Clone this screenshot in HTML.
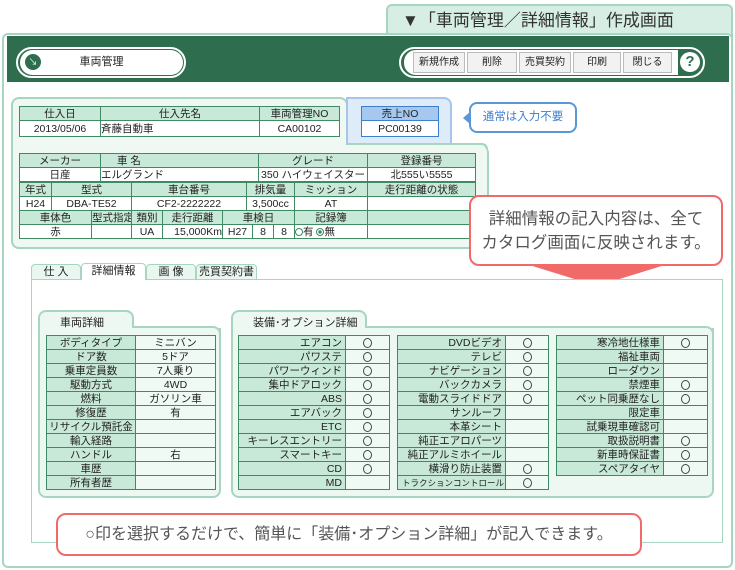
<!DOCTYPE html>
<html><head><meta charset="utf-8"><style>
*{box-sizing:border-box;margin:0;padding:0}
body{width:735px;height:570px;background:#fff;font-family:"Liberation Sans","Noto Sans CJK JP",sans-serif;position:relative;overflow:hidden;color:#222}
.a{position:absolute}
table{border-collapse:collapse;table-layout:fixed;position:absolute;font-size:10.5px}
td{border:1px solid #3d8a63;height:14px;line-height:12px;text-align:center;white-space:nowrap;overflow:hidden;padding:0}
td.h{background:#c8e8d8}
td.v{background:#fff}
.eq td{background:#f0faf5}
.eq td.h{background:#c8e8d8;text-align:right;padding-right:3px}
.c{display:inline-block;width:9px;height:10px;border:1px solid #444;border-radius:50%;vertical-align:middle}
.btn{position:absolute;top:52px;height:21px;background:#f2f2f2;border:1px solid #bbb;font-size:10px;line-height:19px;text-align:center}
.rc{position:absolute;background:#fff;border:2px solid #f06a6a;border-radius:10px;color:#555;text-align:center}
</style></head><body>
<div class="a" style="left:386px;top:4px;width:347px;height:34px;background:#d6eee3;border:2px solid #a6d6c0;border-radius:6px 6px 0 0;font-size:17px;line-height:30px;padding-left:14px;color:#333">▼「車両管理／詳細情報」作成画面</div>
<div class="a" style="left:2px;top:33px;width:731px;height:535px;border:2px solid #a6d6c0;border-radius:6px;background:#fff"></div>
<div class="a" style="left:7px;top:36px;width:722px;height:46px;background:#2e6e4f"></div>
<div class="a" style="left:16px;top:47px;width:170px;height:31px;border:2px solid #fff;border-radius:16px;background:#2e6e4f"></div>
<div class="a" style="left:20px;top:50px;width:163px;height:25px;background:#fff;border-radius:13px;font-size:11px;line-height:25px;text-align:center">車両管理</div>
<div class="a" style="left:25px;top:54px;width:16px;height:16px;border-radius:50%;background:#2e6e4f;color:#fff;font-size:9px;line-height:16px;text-align:center">↘</div>
<div class="a" style="left:399px;top:47px;width:306px;height:31px;border:2px solid #fff;border-radius:16px"></div>
<div class="a" style="left:404px;top:50px;width:274px;height:25px;background:#fff;border-radius:12px 0 0 12px"></div>
<div class="btn" style="left:413px;width:52px">新規作成</div>
<div class="btn" style="left:467px;width:50px">削除</div>
<div class="btn" style="left:519px;width:52px">売買契約</div>
<div class="btn" style="left:573px;width:48px">印刷</div>
<div class="btn" style="left:623px;width:49px">閉じる</div>
<div class="a" style="left:680px;top:52px;width:20px;height:20px;border-radius:50%;background:#fff;color:#2e6e4f;font-weight:bold;font-size:15px;line-height:20px;text-align:center">?</div>

<div class="a" style="left:11px;top:97px;width:337px;height:152px;background:#f0f8f4;border:2px solid #a6d6c0;border-radius:8px"></div>
<div class="a" style="left:346px;top:97px;width:106px;height:52px;background:#deebf8;border:2px solid #a8c4e6;border-radius:0 8px 0 0"></div>
<div class="a" style="left:11px;top:145px;width:478px;height:104px;background:#f0f8f4;border:2px solid #a6d6c0;border-top:none;border-radius:0 8px 8px 8px"></div>
<div class="a" style="left:348px;top:143px;width:140px;height:6px;border-top:2px solid #a6d6c0;border-right:2px solid #a6d6c0;border-radius:0 8px 0 0;background:transparent"></div>
<div class="a" style="left:13px;top:140px;width:333px;height:20px;background:#f0f8f4"></div>

<table style="left:19px;top:106px;width:320px">
<col style="width:81px"><col style="width:159px"><col style="width:80px">
<tr><td class="h">仕入日</td><td class="h">仕入先名</td><td class="h">車両管理NO</td></tr>
<tr><td class="v" style="height:16px">2013/05/06</td><td class="v" style="text-align:left">斉藤自動車</td><td class="v">CA00102</td></tr>
</table>
<table style="left:361px;top:106px;width:78px">
<tr><td style="background:#a6c8ee;border-color:#3b7fcf">売上NO</td></tr>
<tr><td style="background:#fff;border-color:#3b7fcf;height:16px">PC00139</td></tr>
</table>
<div class="a" style="left:469px;top:102px;width:108px;height:31px;border:2px solid #5b97d6;border-radius:8px;background:#fff;color:#3a7fcf;font-size:11.5px;line-height:27px;text-align:center">通常は入力不要</div>
<div class="a" style="left:463px;top:112px;width:0;height:0;border-top:6px solid transparent;border-bottom:6px solid transparent;border-right:7px solid #5b97d6"></div>

<table style="left:19px;top:153px;width:456px">
<col style="width:81px"><col style="width:158px"><col style="width:109px"><col style="width:108px">
<tr><td class="h">メーカー</td><td class="h" style="text-align:left;padding-left:16px">車 名</td><td class="h">グレード</td><td class="h">登録番号</td></tr>
<tr><td class="v">日産</td><td class="v" style="text-align:left">エルグランド</td><td class="v">350 ハイウェイスター</td><td class="v">北555い5555</td></tr>
</table>
<table style="left:19px;top:182px;width:456px">
<col style="width:32px"><col style="width:80px"><col style="width:115px"><col style="width:48px"><col style="width:73px"><col style="width:108px">
<tr><td class="h">年式</td><td class="h">型式</td><td class="h">車台番号</td><td class="h">排気量</td><td class="h">ミッション</td><td class="h">走行距離の状態</td></tr>
<tr><td class="v">H24</td><td class="v">DBA-TE52</td><td class="v">CF2-2222222</td><td class="v">3,500cc</td><td class="v">AT</td><td class="v"></td></tr>
</table>
<table style="left:19px;top:210px;width:456px">
<col style="width:72px"><col style="width:40px"><col style="width:31px"><col style="width:60px"><col style="width:30px"><col style="width:21px"><col style="width:21px"><col style="width:73px"><col style="width:108px">
<tr><td class="h">車体色</td><td class="h">型式指定</td><td class="h">類別</td><td class="h">走行距離</td><td class="h" colspan="3">車検日</td><td class="h">記録簿</td><td class="h"></td></tr>
<tr><td class="v">赤</td><td class="v"></td><td class="v">UA</td><td class="v" style="text-align:right">15,000Km</td><td class="v">H27</td><td class="v">8</td><td class="v">8</td><td class="v" style="text-align:left"><span class="c" style="width:8px;height:8px;border-color:#3d8a63"></span>有 <span class="c" style="width:8px;height:8px;border-color:#3d8a63;background:radial-gradient(#3d8a63 40%,#fff 45%)"></span>無</td><td class="v"></td></tr>
</table>

<div class="rc" style="left:469px;top:195px;width:254px;height:71px;font-size:16.5px;line-height:24px;padding-top:10px">詳細情報の記入内容は、全て<br>カタログ画面に反映されます。</div>
<div class="a" style="left:526px;top:264px;width:0;height:0;border-left:71px solid transparent;border-right:71px solid transparent;border-top:22px solid #f06a6a"></div>

<div class="a" style="left:31px;top:279px;width:692px;height:264px;border:1px solid #a6d6c0;background:#fff"></div>
<div class="a" style="left:31px;top:264px;width:50px;height:16px;background:#eaf6f0;border:1px solid #a6d6c0;border-radius:4px 4px 0 0;font-size:11px;line-height:14px;text-align:center">仕 入</div>
<div class="a" style="left:81px;top:263px;width:65px;height:17px;background:#fff;border:1px solid #a6d6c0;border-bottom:none;border-radius:4px 4px 0 0;font-size:11px;line-height:15px;text-align:center">詳細情報</div>
<div class="a" style="left:146px;top:264px;width:50px;height:16px;background:#eaf6f0;border:1px solid #a6d6c0;border-radius:4px 4px 0 0;font-size:11px;line-height:14px;text-align:center">画 像</div>
<div class="a" style="left:196px;top:264px;width:61px;height:16px;background:#eaf6f0;border:1px solid #a6d6c0;border-radius:4px 4px 0 0;font-size:11px;line-height:14px;text-align:center">売買契約書</div>

<div class="a" style="left:38px;top:310px;width:96px;height:24px;background:#eef8f3;border:2px solid #a6d6c0;border-bottom:none;border-radius:8px 8px 0 0;font-size:11px;line-height:22px;padding-left:20px">車両詳細</div>
<div class="a" style="left:38px;top:328px;width:183px;height:170px;background:#eef8f3;border:2px solid #a6d6c0;border-top:none;border-radius:0 0 8px 8px"></div>
<div class="a" style="left:132px;top:326px;width:89px;height:8px;border-top:2px solid #a6d6c0;border-right:2px solid #a6d6c0;border-radius:0 8px 0 0"></div>
<table class="eq" style="left:46px;top:335px;width:169px">
<col style="width:89px"><col style="width:80px">
<tr><td class="h" style="text-align:center;padding:0">ボディタイプ</td><td>ミニバン</td></tr>
<tr><td class="h" style="text-align:center;padding:0">ドア数</td><td>5ドア</td></tr>
<tr><td class="h" style="text-align:center;padding:0">乗車定員数</td><td>7人乗り</td></tr>
<tr><td class="h" style="text-align:center;padding:0">駆動方式</td><td>4WD</td></tr>
<tr><td class="h" style="text-align:center;padding:0">燃料</td><td>ガソリン車</td></tr>
<tr><td class="h" style="text-align:center;padding:0">修復歴</td><td>有</td></tr>
<tr><td class="h" style="text-align:center;padding:0">リサイクル預託金</td><td></td></tr>
<tr><td class="h" style="text-align:center;padding:0">輸入経路</td><td></td></tr>
<tr><td class="h" style="text-align:center;padding:0">ハンドル</td><td>右</td></tr>
<tr><td class="h" style="text-align:center;padding:0">車歴</td><td></td></tr>
<tr><td class="h" style="text-align:center;padding:0">所有者歴</td><td></td></tr>
</table>

<div class="a" style="left:231px;top:310px;width:136px;height:24px;background:#eef8f3;border:2px solid #a6d6c0;border-bottom:none;border-radius:8px 8px 0 0;font-size:11px;line-height:22px;padding-left:20px">装備･オプション詳細</div>
<div class="a" style="left:231px;top:328px;width:483px;height:170px;background:#eef8f3;border:2px solid #a6d6c0;border-top:none;border-radius:0 0 8px 8px"></div>
<div class="a" style="left:365px;top:326px;width:349px;height:8px;border-top:2px solid #a6d6c0;border-right:2px solid #a6d6c0;border-radius:0 8px 0 0"></div>
<table class="eq" style="left:238px;top:335px;width:151px">
<col style="width:107px"><col style="width:44px">
<tr><td class="h">エアコン</td><td><span class="c"></span></td></tr>
<tr><td class="h">パワステ</td><td><span class="c"></span></td></tr>
<tr><td class="h">パワーウィンド</td><td><span class="c"></span></td></tr>
<tr><td class="h">集中ドアロック</td><td><span class="c"></span></td></tr>
<tr><td class="h">ABS</td><td><span class="c"></span></td></tr>
<tr><td class="h">エアバック</td><td><span class="c"></span></td></tr>
<tr><td class="h">ETC</td><td><span class="c"></span></td></tr>
<tr><td class="h">キーレスエントリー</td><td><span class="c"></span></td></tr>
<tr><td class="h">スマートキー</td><td><span class="c"></span></td></tr>
<tr><td class="h">CD</td><td><span class="c"></span></td></tr>
<tr><td class="h">MD</td><td></td></tr>
</table>
<table class="eq" style="left:397px;top:335px;width:151px">
<col style="width:108px"><col style="width:43px">
<tr><td class="h">DVDビデオ</td><td><span class="c"></span></td></tr>
<tr><td class="h">テレビ</td><td><span class="c"></span></td></tr>
<tr><td class="h">ナビゲーション</td><td><span class="c"></span></td></tr>
<tr><td class="h">バックカメラ</td><td><span class="c"></span></td></tr>
<tr><td class="h">電動スライドドア</td><td><span class="c"></span></td></tr>
<tr><td class="h">サンルーフ</td><td></td></tr>
<tr><td class="h">本革シート</td><td></td></tr>
<tr><td class="h">純正エアロパーツ</td><td></td></tr>
<tr><td class="h">純正アルミホイール</td><td></td></tr>
<tr><td class="h">横滑り防止装置</td><td><span class="c"></span></td></tr>
<tr><td class="h" style="font-size:8.5px;padding-right:1px">トラクションコントロール</td><td><span class="c"></span></td></tr>
</table>
<table class="eq" style="left:556px;top:335px;width:151px">
<col style="width:107px"><col style="width:44px">
<tr><td class="h">寒冷地仕様車</td><td><span class="c"></span></td></tr>
<tr><td class="h">福祉車両</td><td></td></tr>
<tr><td class="h">ローダウン</td><td></td></tr>
<tr><td class="h">禁煙車</td><td><span class="c"></span></td></tr>
<tr><td class="h">ペット同乗歴なし</td><td><span class="c"></span></td></tr>
<tr><td class="h">限定車</td><td></td></tr>
<tr><td class="h">試乗現車確認可</td><td></td></tr>
<tr><td class="h">取扱説明書</td><td><span class="c"></span></td></tr>
<tr><td class="h">新車時保証書</td><td><span class="c"></span></td></tr>
<tr><td class="h">スペアタイヤ</td><td><span class="c"></span></td></tr>
</table>

<div class="rc" style="left:56px;top:513px;width:586px;height:43px;font-size:16px;line-height:39px">○印を選択するだけで、簡単に「装備･オプション詳細」が記入できます。</div>
</body></html>
